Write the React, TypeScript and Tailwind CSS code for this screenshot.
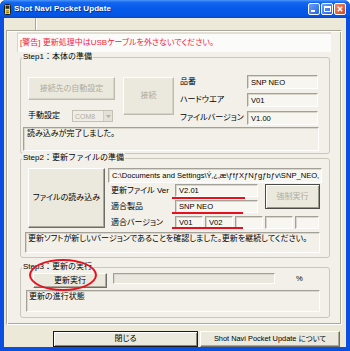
import React from "react";

const FONT = "font-['Liberation_Sans','Noto_Sans_CJK_JP',sans-serif] [font-feature-settings:'palt']";
const PANEL_BG = "bg-[#f2f0e8]";
const TXT = "text-[8px] leading-[10px]";

function Sunken({ className = "", children }: { className?: string; children?: React.ReactNode }) {
  return (
    <div
      className={`border border-t-[#a3a197] border-l-[#a3a197] border-b-white border-r-white shadow-[inset_1px_1px_0_#d9d7cc] ${className}`}
    >
      {children}
    </div>
  );
}

function Box({ w, text = "", className = "" }: { w: string; text?: string; className?: string }) {
  return (
    <Sunken className={`${w} h-[13px] bg-[#f7f6f1] flex items-center pl-[3px] text-[7.6px] leading-[9px] text-black overflow-hidden whitespace-nowrap ${className}`}>
      {text}
    </Sunken>
  );
}

function Btn({
  className = "",
  children,
  disabled = false,
  variant = "raised",
}: {
  className?: string;
  children?: React.ReactNode;
  disabled?: boolean;
  variant?: "raised" | "dark" | "default" | "soft";
}) {
  let border = "";
  if (variant === "raised") {
    border =
      "border border-t-white border-l-white border-b-[#6f6e66] border-r-[#6f6e66] shadow-[inset_-1px_-1px_0_#aca899]";
  } else if (variant === "soft") {
    border =
      "border border-t-white border-l-white border-b-[#bdbbb0] border-r-[#bdbbb0] shadow-[inset_-1px_-1px_0_#d6d4c8]";
  } else if (variant === "dark") {
    border = "border border-[#4a4a46] shadow-[inset_1px_1px_0_white,inset_-1px_-1px_0_#9a988e]";
  } else {
    border = "border border-[#1a1a1a] shadow-[inset_1px_1px_0_white,inset_-1px_-1px_0_#8a887e]";
  }
  return (
    <div
      className={`${border} bg-[#ebe9de] flex items-center justify-center ${TXT} whitespace-nowrap ${
        disabled ? "text-[#aeac9f]" : "text-black"
      } ${className}`}
    >
      {children}
    </div>
  );
}

function Group({ label, className = "", children }: { label: string; className?: string; children?: React.ReactNode }) {
  return (
    <div className={`relative border border-[#c9c7b9] rounded-[3px] ${className}`}>
      <span
        className={`absolute left-[1px] top-[-6px] px-[1px] ${PANEL_BG} ${TXT} [font-feature-settings:normal] text-black whitespace-nowrap`}
      >
        {label}
      </span>
      {children}
    </div>
  );
}

function Label({ className = "", children }: { className?: string; children?: React.ReactNode }) {
  return <span className={`${TXT} text-black whitespace-nowrap ${className}`}>{children}</span>;
}

export default function App() {
  return (
    <div className={`relative w-[350px] h-[351px] bg-[#0b4fe0] rounded-t-[6px] overflow-hidden flex flex-col ${FONT}`}>
      {/* Title bar */}
      <div className="h-[18px] shrink-0 flex items-center bg-[linear-gradient(180deg,#4a95fa_0%,#1466ee_14%,#0559e9_50%,#0555e5_85%,#0848cc_100%)]">
        <svg width="7" height="11" viewBox="0 0 7 11" className="ml-[4px] shrink-0">
          <rect x="0.5" y="0.5" width="6" height="10" rx="1" fill="#f6e23a" stroke="#1b1b1b" />
          <rect x="1.6" y="1.6" width="3.8" height="3.2" fill="#2a2a22" />
          <rect x="2.2" y="6.4" width="2.6" height="1" fill="#6b5a10" />
          <rect x="2.2" y="8.2" width="2.6" height="1" fill="#6b5a10" />
        </svg>
        <span className="ml-[3px] text-[8px] leading-[10px] font-bold text-white tracking-[0.1px] [text-shadow:1px_1px_0_#0b2c8a]">
          Shot Navi Pocket Update
        </span>
        <div className="ml-auto mr-[4px] flex gap-[1px] mb-[1px]">
          <div className="w-[12px] h-[12px] rounded-[2px] border border-white bg-[linear-gradient(135deg,#6aa2f8,#2762e4)] flex items-end pl-[2px] pb-[2px]">
            <div className="w-[4px] h-[2px] bg-white" />
          </div>
          <div className="w-[12px] h-[12px] rounded-[2px] border border-white bg-[linear-gradient(135deg,#6aa2f8,#2762e4)] flex items-center justify-center">
            <div className="w-[7px] h-[6px] border border-white border-t-2" />
          </div>
          <div className="w-[12px] h-[12px] rounded-[2px] border border-white bg-[linear-gradient(135deg,#ee8a6a,#d5441e)] flex items-center justify-center">
            <svg width="6" height="6" viewBox="0 0 6 6">
              <path d="M0.8 0.8 L5.2 5.2 M5.2 0.8 L0.8 5.2" stroke="white" strokeWidth="1.5" />
            </svg>
          </div>
        </div>
      </div>

      {/* Body */}
      <div className="mx-[4px] h-[329px] bg-[#ece9d8] flex flex-col">
        {/* strip */}
        <div className="h-[12px] shrink-0 flex">
          <div className="ml-[31px] w-[2px] h-full border-l border-l-[#a9a79c] border-r border-r-white" />
        </div>

        {/* Panel */}
        <div
          className={`ml-[2px] w-[336px] h-[295px] ${PANEL_BG} border border-t-[#aca899] border-l-[#aca899] border-b-white border-r-white shadow-[inset_1px_1px_0_white,inset_-1px_-1px_0_#aca899] flex flex-col pt-[1px] pl-[1px]`}
        >
          {/* Warning */}
          <div className="ml-[9px] w-[314px] h-[20px] bg-[#fbfbf9] border-t-2 border-l border-t-[#e2e0d6] border-l-[#d8d6cb] flex items-center pl-[2px]">
            <span className={`${TXT} text-[#f2233a] whitespace-nowrap`}>
              [警告] 更新処理中はUSBケーブルを外さないでください。
            </span>
          </div>

          {/* Step1 */}
          <Group label="Step1：本体の準備" className="ml-[12px] mt-[5px] w-[310px] h-[97px]">
            <div className="pt-[17px]">
              <div className="flex h-[50px]">
                <div className="ml-[7px] w-[87px] flex flex-col">
                  <Btn variant="soft" disabled className="mt-[2px] h-[23px] w-[87px]">
                    接続先の自動設定
                  </Btn>
                  <div className="mt-[10px] h-[12px] flex items-center">
                    <Label className="w-[44px]">手動設定</Label>
                    <div className="w-[41px] h-[12px] border border-[#c3c1b4] bg-[#efede5] flex items-center">
                      <span className="pl-[2px] flex-1 text-[7px] leading-[9px] text-[#b1afa3]">COM8</span>
                      <div className="w-[9px] h-[10px] bg-[#e4e2d8] border-l border-[#d0cec2] flex items-center justify-center">
                        <svg width="5" height="3" viewBox="0 0 5 3">
                          <path d="M0 0 L5 0 L2.5 3 Z" fill="#b4b2a6" />
                        </svg>
                      </div>
                    </div>
                  </div>
                </div>
                <Btn variant="soft" disabled className="ml-[8px] mt-[2px] w-[51px] h-[38px]">
                  接続
                </Btn>
                <div className="ml-[6px] flex flex-col gap-[4px]">
                  {[
                    ["品番", "SNP NEO"],
                    ["ハードウエア", "V01"],
                    ["ファイルバージョン", "V1.00"],
                  ].map(([l, v]) => (
                    <div key={l} className="flex h-[14px] items-center">
                      <Label className="w-[67px]">{l}</Label>
                      <Box w="w-[71px]" text={v} className="h-[14px]" />
                    </div>
                  ))}
                </div>
              </div>
              <Sunken className={`ml-[2px] mt-[2px] w-[296px] h-[24px] pl-[3px] pt-[1px] ${TXT} text-black`}>
                読み込みが完了しました。
              </Sunken>
            </div>
          </Group>

          {/* Step2 */}
          <Group label="Step2：更新ファイルの準備" className="ml-[12px] mt-[4px] w-[310px] h-[100px]">
            <div className="pt-[9px]">
              <div className="flex">
                <Btn variant="raised" className="ml-[7px] w-[77px] h-[60px]">
                  ファイルの読み込み
                </Btn>
                <div className="ml-[3px] w-[214px] flex flex-col">
                  <Box w="w-[214px]" className="h-[15px]" text={"C:\\Documents and Settings\\Ý‚¿‚æ\\ƒfƒXƒNƒgƒbƒv\\SNP_NEO‚"} />
                  <div className="mt-[1px] flex">
                    <div className="w-[150px] flex flex-col gap-[3px]">
                      <div className="flex items-center h-[13px]">
                        <Label className="w-[67px] pl-[3px]">更新ファイル Ver</Label>
                        <Box w="w-[83px]" text="V2.01" />
                      </div>
                      <div className="flex items-center h-[13px]">
                        <Label className="w-[67px] pl-[3px]">適合製品</Label>
                        <Box w="w-[83px]" text="SNP NEO" />
                      </div>
                    </div>
                    <Btn variant="dark" disabled className="ml-[7px] w-[55px] h-[25px]">
                      強制実行
                    </Btn>
                  </div>
                  <div className="mt-[3px] flex items-center h-[13px]">
                    <Label className="w-[67px] pl-[3px]">適合バージョン</Label>
                    <div className="flex gap-[2px]">
                      <Box w="w-[28px]" text="V01" />
                      <Box w="w-[28px]" text="V02" />
                      <Box w="w-[28px]" />
                      <Box w="w-[28px]" />
                      <Box w="w-[24px]" />
                    </div>
                  </div>
                </div>
              </div>
              <Sunken className={`ml-[4px] mt-[3px] w-[295px] h-[21px] pl-[2px] pt-[1px] ${TXT} text-black whitespace-nowrap overflow-hidden`}>
                更新ソフトが新しいバージョンであることを確認しました。更新を継続してください。
              </Sunken>
            </div>
          </Group>

          {/* Step3 */}
          <Group label="Step3：更新の実行" className="ml-[12px] mt-[9px] w-[310px] h-[51px]">
            <div className="pt-[5px]">
              <div className="flex items-start">
                <Btn variant="raised" className="ml-[12px] w-[74px] h-[15px]">
                  更新実行
                </Btn>
                <Sunken className="ml-[6px] w-[162px] h-[11px] bg-[#e9e7de]" />
                <span className="ml-[21px] text-[7.6px] leading-[11px] text-black">%</span>
              </div>
              <Sunken className={`ml-[5px] mt-[2px] w-[294px] h-[22px] pl-[2px] pt-[1px] ${TXT} text-black`}>
                更新の進行状態
              </Sunken>
            </div>
          </Group>
        </div>

        {/* Bottom buttons */}
        <div className="mt-[6px] flex h-[16px]">
          <Btn variant="default" className="ml-[49px] w-[145px] h-[16px]">
            閉じる
          </Btn>
          <Btn variant="raised" className="ml-[2px] w-[140px] h-[16px] !text-[7.4px]">
            Shot Navi Pocket Update について
          </Btn>
        </div>
      </div>

      {/* Red annotations */}
      <div className="absolute left-[172px] top-[197px] w-[73px] h-[2px] bg-[#e8101e]" />
      <div className="absolute left-[172px] top-[212px] w-[71px] h-[2px] bg-[#e8101e]" />
      <div className="absolute left-[172px] top-[227px] w-[71px] h-[2px] bg-[#e8101e]" />
      <div className="absolute left-[29px] top-[259px] w-[68px] h-[32px] rounded-[50%] border-2 border-[#e8101e]" />
    </div>
  );
}
